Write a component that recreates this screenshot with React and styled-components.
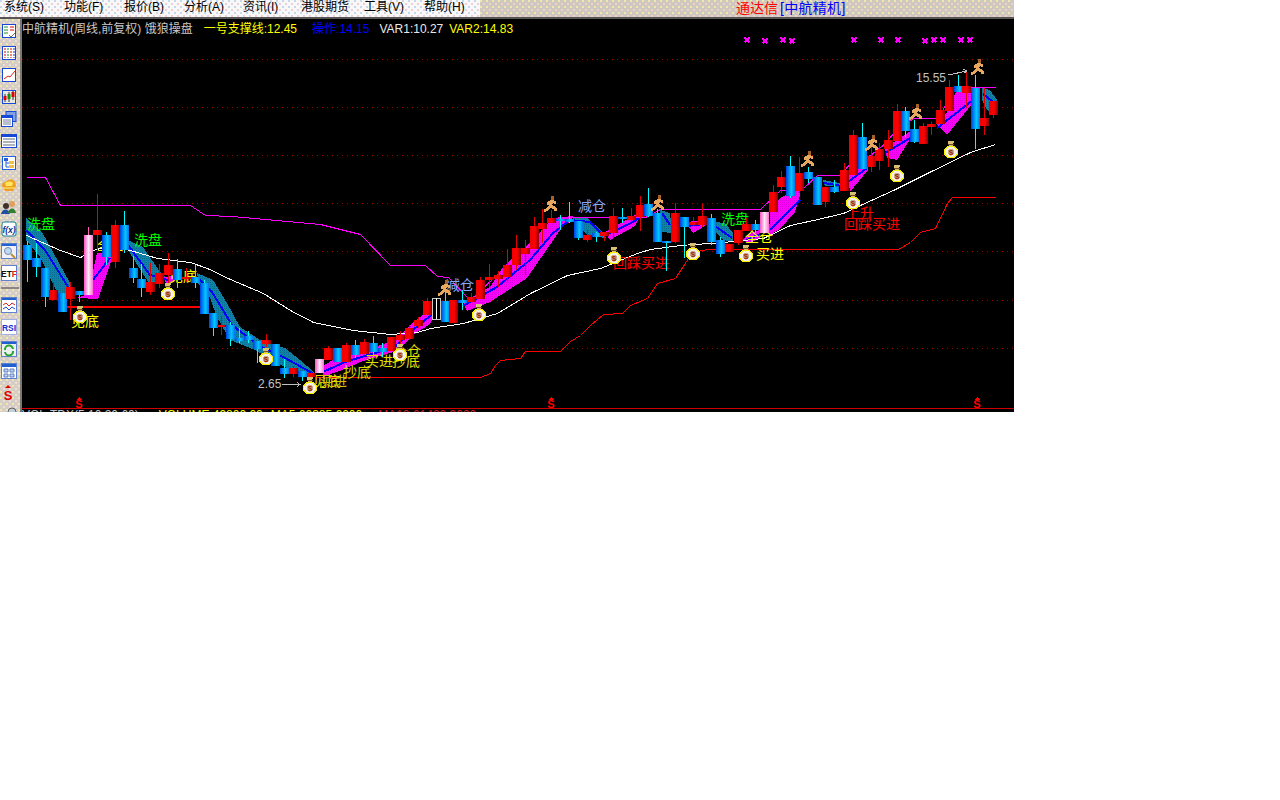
import React from 'react';
import styled, { createGlobalStyle } from 'styled-components';

const FONT = '"Liberation Sans", "Noto Sans CJK SC", sans-serif';

const GlobalStyle = createGlobalStyle`
  html, body { margin: 0; padding: 0; background: #fff; }
  body { font-family: ${FONT}; }
`;

const Window = styled.div`
  width: 1014px;
  height: 412px;
  overflow: hidden;
  display: flex;
  flex-direction: column;
`;

// top menu + title
const TopBar = styled.div`
  display: flex;
  height: 19px;
  box-sizing: border-box;
  flex: none;
  border-bottom: 2px solid #555;
`;

const MenuBar = styled.div`
  width: 480px;
  flex: none;
  display: flex;
  padding-left: 4px;
  box-sizing: border-box;
  background-color: #f8f8f8;
  background-image:
    radial-gradient(circle at 1px 1px, #c8d8e8 1px, transparent 1px),
    radial-gradient(circle at 4px 4px, #f0d0d8 1px, transparent 1px);
  background-size: 6px 6px;
`;

const MenuItem = styled.span`
  width: ${p => p.$w}px;
  font-size: 12px;
  line-height: 14px;
  color: #000;
  white-space: nowrap;
`;

const TitleBar = styled.div`
  flex: 1;
  display: flex;
  padding-left: 256px;
  font-size: 14px;
  line-height: 16px;
  background-color: #cfc8c0;
  background-image:
    radial-gradient(circle at 1px 1px, #f0e8a8 1px, transparent 1px),
    radial-gradient(circle at 4px 4px, #f0d0c8 1px, transparent 1px);
  background-size: 6px 6px;
`;

const TitleText = styled.span`
  color: ${p => p.$color};
  margin-left: ${p => p.$gap || 0}px;
  letter-spacing: ${p => p.$spacing || 0}px;
  white-space: pre;
`;

const Body = styled.div`
  flex: 1;
  display: flex;
  min-height: 0;
`;

const ToolBar = styled.div`
  width: 22px;
  flex: none;
  display: flex;
  flex-direction: column;
  align-items: flex-start;
  gap: 6px;
  padding: 4px 0 0 1px;
  box-sizing: border-box;
  overflow: hidden;
  border-right: 2px solid #777;
  background-color: #d4cec6;
  background-image:
    radial-gradient(circle at 1px 1px, #f0e8b0 1px, transparent 1px),
    radial-gradient(circle at 4px 4px, #f4dcd4 1px, transparent 1px);
  background-size: 6px 6px;
`;

const ToolIcon = styled.svg`
  width: 16px;
  height: 16px;
  flex: none;
  display: block;
`;

const ToolSeparator = styled.div`
  width: 18px;
  height: 2px;
  flex: none;
  margin-bottom: 2px;
  background: #8a8580;
`;

const ChartPane = styled.div`
  position: relative;
  flex: 1;
  display: flex;
  flex-direction: column;
  background: #000;
  min-width: 0;
`;

const Legend = styled.div`
  position: absolute;
  top: 3px;
  left: 0;
  display: flex;
  font-size: 12px;
  line-height: 14px;
  white-space: pre;
`;

const LegendItem = styled.span`
  color: ${p => p.$color};
  margin-left: ${p => p.$gap || 0}px;
`;

const ChartSvg = styled.svg`
  display: block;
  width: 992px;
  height: 390px;
  flex: none;
  shape-rendering: crispEdges;
`;

const IndicatorRow = styled.div`
  height: 3px;
  overflow: hidden;
  display: flex;
  font-size: 12px;
  line-height: 12px;
  white-space: pre;
`;

const ChartLabel = styled.text`
  fill: ${p => p.$color};
  font-family: ${FONT};
  font-size: ${p => p.$size || 14}px;
`;

const FX = [
  [747, 40], [765, 41], [783, 40], [792, 41], [854, 40], [881, 40], [898, 40],
  [925, 41], [934, 40], [943, 40], [961, 40], [970, 40],
];

// x, body top, body bottom, high, low, kind (b blue, r red, p pink, h hollow)
const CANDLES = [
  [27, 245, 260, 241, 282, 'b'], [36, 258, 267, 243, 277, 'b'], [45, 268, 297, 268, 307, 'b'],
  [53, 290, 300, 282, 300, 'r'], [62, 293, 312, 293, 312, 'b'], [70, 287, 299, 282, 320, 'r'],
  [79, 291, 295, 291, 302, 'b'], [88, 235, 295, 227, 295, 'p'], [97, 230, 235, 194, 250, 'r'],
  [106, 235, 257, 232, 265, 'b'], [115, 225, 262, 220, 268, 'r'], [124, 225, 250, 211, 253, 'b'],
  [133, 268, 278, 256, 283, 'b'], [141, 279, 288, 264, 297, 'b'], [150, 282, 292, 263, 295, 'r'],
  [159, 273, 284, 264, 288, 'r'], [168, 265, 275, 253, 284, 'r'], [177, 269, 280, 259, 288, 'b'],
  [186, 277, 279, 268, 282, 'r'], [195, 277, 283, 265, 288, 'b'], [204, 283, 314, 280, 314, 'b'],
  [213, 313, 328, 313, 336, 'b'], [221, 325, 327, 316, 335, 'r'], [230, 325, 339, 322, 346, 'b'],
  [239, 338, 341, 328, 343, 'b'], [248, 336, 340, 331, 343, 'b'], [257, 341, 349, 341, 363, 'b'],
  [266, 340, 344, 334, 347, 'r'], [275, 344, 366, 344, 366, 'b'], [284, 368, 374, 359, 378, 'b'],
  [293, 368, 374, 366, 377, 'r'], [302, 371, 377, 371, 381, 'b'], [311, 373, 377, 372, 380, 'r'],
  [319, 359, 373, 359, 373, 'p'], [328, 348, 360, 346, 360, 'r'], [337, 348, 362, 348, 362, 'b'],
  [346, 345, 362, 343, 362, 'r'], [355, 345, 355, 340, 358, 'b'], [364, 342, 354, 339, 354, 'r'],
  [373, 343, 352, 336, 357, 'b'], [382, 348, 352, 343, 357, 'b'], [391, 337, 351, 337, 351, 'r'],
  [400, 335, 340, 331, 351, 'r'], [409, 328, 339, 325, 339, 'r'], [418, 320, 326, 317, 328, 'r'],
  [427, 301, 315, 298, 315, 'r'], [436, 298, 319, 298, 319, 'h'], [445, 301, 322, 292, 322, 'b'],
  [453, 300, 323, 300, 323, 'r'], [462, 300, 303, 290, 310, 'b'], [471, 297, 302, 293, 302, 'r'],
  [480, 280, 299, 277, 299, 'r'], [489, 277, 280, 264, 287, 'r'], [498, 275, 279, 271, 287, 'r'],
  [507, 265, 277, 249, 282, 'r'], [516, 248, 265, 235, 270, 'r'], [525, 248, 254, 240, 275, 'r'],
  [534, 226, 249, 217, 249, 'r'], [542, 223, 229, 209, 243, 'r'], [551, 218, 223, 210, 223, 'r'],
  [560, 219, 221, 215, 230, 'b'], [569, 219, 222, 202, 223, 'b'], [578, 221, 238, 221, 240, 'b'],
  [587, 235, 240, 230, 242, 'r'], [596, 233, 237, 232, 242, 'b'], [604, 232, 236, 232, 241, 'r'],
  [613, 216, 233, 208, 238, 'r'], [622, 217, 219, 208, 223, 'b'], [631, 216, 220, 208, 222, 'r'],
  [640, 205, 217, 196, 231, 'r'], [648, 204, 216, 188, 217, 'b'], [657, 213, 242, 209, 242, 'b'],
  [666, 241, 243, 241, 271, 'b'], [675, 213, 242, 203, 243, 'r'], [684, 217, 227, 217, 258, 'b'],
  [693, 222, 225, 217, 226, 'r'], [702, 216, 225, 204, 227, 'r'], [711, 218, 242, 214, 245, 'b'],
  [720, 240, 254, 237, 257, 'b'], [729, 244, 252, 244, 252, 'r'], [738, 230, 243, 230, 245, 'r'],
  [746, 224, 231, 218, 231, 'r'], [755, 224, 230, 220, 233, 'b'], [764, 212, 233, 212, 233, 'p'],
  [773, 192, 212, 185, 212, 'r'], [781, 177, 187, 171, 193, 'r'], [790, 166, 196, 156, 198, 'b'],
  [799, 173, 191, 157, 193, 'r'], [808, 172, 179, 167, 183, 'b'], [817, 177, 205, 177, 205, 'b'],
  [825, 187, 202, 187, 207, 'r'], [834, 187, 192, 180, 193, 'b'], [844, 170, 191, 163, 191, 'r'],
  [853, 135, 175, 130, 175, 'r'], [862, 137, 169, 123, 169, 'b'], [871, 156, 167, 143, 172, 'r'],
  [879, 149, 161, 143, 170, 'r'], [888, 140, 149, 130, 167, 'r'], [897, 111, 141, 104, 141, 'r'],
  [905, 111, 131, 107, 137, 'b'], [914, 129, 142, 120, 143, 'b'], [923, 126, 144, 123, 144, 'r'],
  [931, 124, 127, 122, 135, 'r'], [940, 110, 124, 100, 124, 'r'], [949, 87, 111, 80, 111, 'r'],
  [958, 86, 92, 75, 92, 'b'], [966, 86, 93, 72, 108, 'r'], [975, 88, 129, 75, 149, 'b'],
  [984, 118, 126, 88, 135, 'r'], [993, 101, 115, 101, 118, 'r'],
];

const TEAL_BANDS = [
  '26,218 42,232 70,283 72,298 57,292 40,257 26,240',
  '128,240 143,247 160,272 167,278 150,285 128,250',
  '197,273 213,280 227,303 240,327 260,340 285,348 300,360 314,372 314,376 295,372 275,362 255,350 230,340 217,317 207,290 197,283',
  '573,217 587,218 603,232 606,238 590,236 576,226',
  '660,210 670,213 672,233 662,232',
  '715,222 725,223 733,233 733,242 723,240 715,232',
  '823,180 840,183 842,187 825,186',
  '982,88 990,90 997,100 997,115 987,110 982,100',
];

const MAGENTA_BANDS = [
  '77,298 88,294 97,253 111,254 111,262 98,299',
  '163,277 173,276 174,282 166,283',
  '323,366 343,354 363,351 395,340 413,322 430,310 440,298 440,303 430,324 413,335 397,351 363,361 342,370 323,377',
  '463,302 490,287 503,267 530,243 553,218 573,216 570,222 563,226 545,252 527,278 490,302 467,311',
  '605,232 633,216 641,213 635,226 610,240',
  '686,222 695,221 705,222 705,226 693,233',
  '742,240 750,233 760,230 760,238 750,243',
  '770,212 780,198 800,188 800,195 795,212 780,229 769,236',
  '848,175 868,158 868,170 850,192',
  '885,148 912,130 912,136 897,160 887,158',
  '937,125 947,112 957,90 973,90 972,104 947,135',
];

const BLUE_LINES = [
  '26,230 45,250 70,290', '93,280 110,258', '128,245 150,275 168,280',
  '197,277 212,292 232,325 258,345 285,358 314,374',
  '323,372 345,362 395,347 413,330 435,312',
  '463,306 497,287 530,260 553,233 570,220 590,222 604,236',
  '608,234 633,222 642,216', '662,213 670,225', '686,226 705,224', '715,226 732,238',
  '745,241 760,234', '770,230 800,200', '824,183 842,186', '848,182 867,168',
  '885,153 912,137', '937,128 973,100', '983,94 996,104',
];

const RED_SUPPORT = '67,307 200,307';
const RED_STEPS = '316,377 480,377 490,373 495,365 500,360 520,358 525,351 560,351 570,341 580,335 590,325 603,314 622,313 630,305 647,298 657,283 675,278 688,258 700,250 710,249 898,249 910,242 920,232 935,228 947,203 952,197 995,197';
const MAGENTA_LINE = '26,177 45,177 60,205 190,205 205,215 232,216 320,224 360,234 390,265 425,265 437,276 448,277 470,300 553,220 568,217 645,217 660,209 760,209 780,190 803,188 817,175 840,175 850,163 870,155 885,143 893,133 913,118 937,118 947,102 955,87 995,87';
const WHITE_LINE = '26,235 60,250 80,257 93,250 110,245 130,250 157,258 190,262 207,268 230,279 263,293 290,310 313,322 353,330 390,334 417,332 430,328 463,323 497,313 530,293 567,275 600,268 637,253 650,249 680,245 723,242 763,238 790,225 813,220 843,213 860,205 893,190 927,173 970,152 995,144';

const BAGS = [
  [80, 315], [168, 292], [266, 357], [310, 386], [400, 353], [479, 313],
  [614, 256], [693, 252], [746, 254], [853, 201], [897, 174], [951, 150],
];

const RUNNERS = [
  [445, 288], [551, 204], [658, 203], [808, 159], [872, 143], [916, 112], [978, 67],
];

const LABELS = [
  ['洗盘', 27, 229, '#00ff00'],
  ['洗盘', 134, 245, '#00ff00'],
  ['洗盘', 721, 224, '#00ff00'],
  ['见底', 71, 326, '#ffff00'],
  ['全仓', 97, 250, '#ffff00'],
  ['见底', 169, 281, '#ffff00'],
  ['见底', 313, 386, '#e8e800'],
  ['买进', 319, 386, '#d0c000'],
  ['抄底', 343, 377, '#d8d800'],
  ['买进', 365, 366, '#e0e000'],
  ['抄底', 392, 366, '#e0e000'],
  ['全仓', 393, 356, '#e0e000'],
  ['减仓', 446, 290, '#88a8ff'],
  ['减仓', 578, 211, '#88a8ff'],
  ['回踩买进', 613, 268, '#ff0000'],
  ['上升', 846, 218, '#ff0000'],
  ['回踩买进', 844, 229, '#ff0000'],
  ['全仓', 745, 242, '#ffff00'],
  ['买进', 756, 259, '#ffff00'],
];

const MoneyBag = ({ x, y }) => (
  <g transform={`translate(${x},${y})`}>
    <polygon points="-3,-9 3,-9 2,-4 -2,-4" fill="#d8c070" />
    <rect x="-3" y="-6" width="6" height="1" fill="#705020" />
    <ellipse cx="0" cy="2" rx="7.5" ry="6.5" fill="#f8f000" />
    <ellipse cx="0" cy="2" rx="6" ry="5" fill="#f4f0e4" />
    <ellipse cx="0" cy="2" rx="3.5" ry="3" fill="#c8a890" />
    <text x="0" y="5" textAnchor="middle" fontSize="8" fontWeight="bold" fontFamily={FONT} fill="#a02800">$</text>
  </g>
);

const Runner = ({ x, y }) => (
  <g transform={`translate(${x},${y})`} fill="none" stroke="#e8a860" strokeWidth="3">
    <circle cx="1.5" cy="-6" r="1.5" fill="#a86028" strokeWidth="1" stroke="#a86028" />
    <path d="M1 -3 L-1 2 M-4 0 L1 -3 L5 -1 M-1 2 L4 4 L5 7 M-1 2 L-3 5 L-7 7" />
  </g>
);

const Candle = ({ c }) => {
  const [x, top, bottom, high, low, kind] = c;
  const wick = kind === 'b' ? '#00ffff' : kind === 'p' ? '#ff60c0' : kind === 'h' ? '#c0c0c0' : '#e00000';
  const h = Math.max(bottom - top, 2);
  return (
    <g>
      <line x1={x + 0.5} x2={x + 0.5} y1={high} y2={low} stroke={wick} />
      {kind === 'h' ? (
        <>
          <rect x={x - 3.5} y={top + 0.5} width={8} height={h} fill="#000" stroke="#c8c8c8" />
          <line x1={x + 0.5} x2={x + 0.5} y1={top} y2={top + h} stroke="#ffffff" />
        </>
      ) : (
        <rect x={x - 4} y={top} width={9} height={h} fill={`url(#grad-${kind})`} />
      )}
    </g>
  );
};

const StartMark = ({ x }) => (
  <g>
    <polygon points={`${x},397 ${x - 3},400 ${x + 3},400`} fill="#ff0000" />
    <text x={x} y={408} textAnchor="middle" fontSize="11" fontWeight="bold" fontFamily={FONT} fill="#ff0000">S</text>
  </g>
);

const Frame = ({ fill = '#fff', color = '#1848d8' }) => (
  <rect x="1.5" y="1.5" width="13" height="13" fill={fill} stroke={color} />
);

const TOOL_ICONS = [
  <><Frame /><path d="M3 4h4M3 7h4M3 10h4" stroke="#209020" /><path d="M9 4h4M9 7h4" stroke="#e00000" /><path d="M8 12l2 2 4-4" stroke="#707070" fill="none" /></>,
  <><Frame /><path d="M4 3v10M4 3" stroke="#e00000" strokeDasharray="2 1" /><path d="M7 3v10" stroke="#109010" strokeDasharray="2 1" /><path d="M10 3v10" stroke="#e00000" strokeDasharray="2 1" /><path d="M13 3v10" stroke="#1030d0" strokeDasharray="2 1" /></>,
  <><Frame /><path d="M3 12l4-3 2 1 5-6" stroke="#e02020" fill="none" /></>,
  <><Frame fill="#e8e8e0" /><path d="M4 5v8M8 3v10M12 2v9" stroke="#303030" /><rect x="2.5" y="7" width="3" height="4" fill="#e00000" /><rect x="6.5" y="5" width="3" height="5" fill="#109010" /><rect x="10.5" y="3" width="3" height="5" fill="#e00000" /></>,
  <><rect x="5" y="0.5" width="10" height="10" fill="#80a0e0" stroke="#1848d8" /><rect x="0.5" y="4.5" width="11" height="11" fill="#fff" stroke="#1848d8" /><rect x="1" y="5" width="10" height="2" fill="#1848d8" /><path d="M2 9h8M2 11h8M2 13h8" stroke="#7080a0" /></>,
  <><rect x="0.5" y="1.5" width="15" height="13" fill="#fff" stroke="#1848d8" /><rect x="1" y="2" width="14" height="2" fill="#1848d8" /><path d="M2 6h12M2 9h12M2 12h12" stroke="#606880" /></>,
  <><Frame color="#2060e0" /><rect x="3" y="3" width="4" height="3" fill="#2060e0" /><rect x="8" y="6" width="5" height="3" fill="#f0c040" /><rect x="8" y="10" width="5" height="3" fill="#f0c040" /><path d="M5 6v6h3M5 8h3" stroke="#2060e0" fill="none" /></>,
  <><path d="M1 9 C1 4 4 6 7 3 C11 1 15 4 15 9 L12 14 L4 14Z" fill="#f0a020" /><path d="M4 6 C7 4 10 4 12 6 L11 9 L5 9Z" fill="#ffe860" /><path d="M2 11h12" stroke="#fff080" /></>,
  <><circle cx="5" cy="7" r="3" fill="#403028" /><path d="M0 15 C1 9 8 9 9 15Z" fill="#2050a0" /><circle cx="11" cy="5" r="3" fill="#e0a060" /><path d="M7 14 C8 8 14 8 15 14Z" fill="#308030" /></>,
  <><rect x="1" y="1" width="14" height="14" rx="2" fill="#fff" stroke="#108090" /><text x="8" y="11.5" textAnchor="middle" fontSize="8.5" fontStyle="italic" fontWeight="bold" fontFamily={FONT} fill="#103090">f(x)</text></>,
  <><rect x="0.5" y="0.5" width="15" height="15" fill="#f0f0f8" stroke="#6080d0" /><rect x="1" y="1" width="14" height="2" fill="#2060d0" /><circle cx="7" cy="8" r="3.5" fill="#c0d8f0" stroke="#7090b0" /><path d="M10 11l4 4" stroke="#c09030" strokeWidth="2" /></>,
  <><rect x="0.5" y="0.5" width="15" height="15" fill="#fff" stroke="#6080d0" /><text x="8" y="11.5" textAnchor="middle" fontSize="8.5" fontWeight="bold" fontFamily={FONT} fill="#101010">ET<tspan fill="#e02020">F</tspan></text></>,
  <><rect x="0.5" y="0.5" width="15" height="15" fill="#fff" stroke="#6080d0" /><rect x="1" y="1" width="14" height="2" fill="#2060d0" /><path d="M2 8l3-2 3 3 3-3 3 2" stroke="#e02020" fill="none" /><path d="M2 12l3-2 3 3 3-3 3 2" stroke="#2040d0" fill="none" /></>,
  <><rect x="0.5" y="0.5" width="15" height="15" fill="#fff" stroke="#a0b0e0" /><text x="8" y="11.5" textAnchor="middle" fontSize="8.5" fontWeight="bold" fontFamily={FONT} fill="#1030d0">RSI</text></>,
  <><rect x="0.5" y="0.5" width="15" height="15" fill="#e8f0f0" stroke="#6080d0" /><rect x="1" y="1" width="14" height="2" fill="#2060d0" /><path d="M4 9a4 4 0 0 1 8 -1M12 10a4 4 0 0 1 -8 1" stroke="#30a030" strokeWidth="2" fill="none" /></>,
  <><rect x="0.5" y="0.5" width="15" height="15" fill="#fff" stroke="#6080d0" /><rect x="1" y="1" width="14" height="3" fill="#2060d0" /><path d="M3 6h4v3h-4zM9 6h4v3h-4zM3 11h4v3h-4zM9 11h4v3h-4z" fill="#c0d0f0" stroke="#6080c0" /></>,
  <><polygon points="7,0 4,3 10,3" fill="#e00000" /><text x="7" y="15" textAnchor="middle" fontSize="13" fontWeight="bold" fontFamily={FONT} fill="#e00000">S</text></>,
  <><path d="M1 8 L6 6 L6 8Z" fill="#e09040" /><circle cx="11" cy="5" r="4" fill="#c0d0d8" stroke="#606060" /></>,
];

const MENU = [
  ['系统(S)', 60], ['功能(F)', 60], ['报价(B)', 60], ['分析(A)', 59], ['资讯(I)', 58],
  ['港股期货', 63], ['工具(V)', 60], ['帮助(H)', 50],
];

export default function App() {
  return (
    <>
      <GlobalStyle />
      <Window>
        <TopBar>
          <MenuBar>
            {MENU.map(([label, w]) => <MenuItem key={label} $w={w}>{label}</MenuItem>)}
          </MenuBar>
          <TitleBar>
            <TitleText $color="#ff0000">通达信</TitleText>
            <TitleText $color="#0000ff" $gap={2} $spacing={0.3}>[中航精机]</TitleText>
          </TitleBar>
        </TopBar>
        <Body>
          <ToolBar>
            {TOOL_ICONS.map((icon, i) => (
              <React.Fragment key={i}>
                <ToolIcon viewBox="0 0 16 16">{icon}</ToolIcon>
                {i === 11 && <ToolSeparator />}
              </React.Fragment>
            ))}
          </ToolBar>
          <ChartPane>
            <ChartSvg viewBox="22 19 992 390">
              <defs>
                <linearGradient id="grad-b">
                  <stop offset="0" stopColor="#0040e0" />
                  <stop offset="0.6" stopColor="#00c8ff" />
                  <stop offset="1" stopColor="#0070e8" />
                </linearGradient>
                <linearGradient id="grad-r">
                  <stop offset="0" stopColor="#f00000" />
                  <stop offset="0.55" stopColor="#ff0000" />
                  <stop offset="1" stopColor="#900000" />
                </linearGradient>
                <linearGradient id="grad-p">
                  <stop offset="0" stopColor="#ff50c0" />
                  <stop offset="0.5" stopColor="#ffe8f8" />
                  <stop offset="1" stopColor="#ff70d0" />
                </linearGradient>
                <pattern id="teal" width="2" height="2" patternUnits="userSpaceOnUse">
                  <rect width="2" height="2" fill="#0c84a8" />
                  <rect width="1" height="1" fill="#0a6c90" />
                </pattern>
                <pattern id="magenta" width="2" height="2" patternUnits="userSpaceOnUse">
                  <rect width="2" height="2" fill="#ff00ff" />
                  <rect width="1" height="1" fill="#e000e0" />
                </pattern>
              </defs>

              {[59, 107, 155, 203, 251, 300, 348].map(y => (
                <line key={y} x1="22" x2="1014" y1={y + 0.5} y2={y + 0.5} stroke="#a00000" strokeDasharray="1 4" />
              ))}

              {FX.map(([x, y]) => (
                <path key={x} d={`M${x - 2.5} ${y - 2.5}L${x + 2.5} ${y + 2.5}M${x + 2.5} ${y - 2.5}L${x - 2.5} ${y + 2.5}`} stroke="#ff00ff" strokeWidth="1.6" />
              ))}

              {TEAL_BANDS.map((p, i) => <polygon key={i} points={p} fill="url(#teal)" />)}
              {MAGENTA_BANDS.map((p, i) => <polygon key={i} points={p} fill="url(#magenta)" />)}
              {BLUE_LINES.map((p, i) => <polyline key={i} points={p} fill="none" stroke="#0000ff" strokeWidth="2" />)}

              <g transform="translate(0.5,0.5)" fill="none">
                <polyline points={MAGENTA_LINE} stroke="#ff00ff" />
                <polyline points={WHITE_LINE} stroke="#ffffff" />
                <polyline points={RED_STEPS} stroke="#ff0000" />
              </g>
              <polyline points={RED_SUPPORT} fill="none" stroke="#ff0000" strokeWidth="2" />

              {LABELS.map(([text, x, y, color], i) => (
                <ChartLabel key={i} x={x} y={y} $color={color}>{text}</ChartLabel>
              ))}

              {CANDLES.map(c => <Candle key={c[0]} c={c} />)}

              {BAGS.map(([x, y]) => <MoneyBag key={x} x={x} y={y} />)}
              {RUNNERS.map(([x, y]) => <Runner key={x} x={x} y={y} />)}

              <ChartLabel x="258" y="388" $color="#c0c0c0" $size={12}>2.65</ChartLabel>
              <path d="M282 384.5H300M297 382.5L300 384.5L297 386.5" fill="none" stroke="#c0c0c0" />
              <ChartLabel x="916" y="82" $color="#c0c0c0" $size={12}>15.55</ChartLabel>
              <path d="M948 75L967 71M963 69L967 71L964 73" fill="none" stroke="#c0c0c0" />

              {[79, 551, 977].map(x => <StartMark key={x} x={x} />)}
              <line x1="22" x2="1014" y1="408.5" y2="408.5" stroke="#d00000" />
            </ChartSvg>
            <Legend>
              <LegendItem $color="#c8c8c8">中航精机(周线,前复权) 饿狼操盘</LegendItem>
              <LegendItem $color="#ffff00" $gap={11}>一号支撑线:12.45</LegendItem>
              <LegendItem $color="#0000ff" $gap={15}>操作:14.15</LegendItem>
              <LegendItem $color="#e8e8e8" $gap={10}>VAR1:10.27</LegendItem>
              <LegendItem $color="#ffff00" $gap={6}>VAR2:14.83</LegendItem>
            </Legend>
            <IndicatorRow>
              <LegendItem $color="#c8c8c8">VOL-TDX(5,10,20,60)</LegendItem>
              <LegendItem $color="#ffff00" $gap={20}>VOLUME:49800.00</LegendItem>
              <LegendItem $color="#ffff00" $gap={8}>MA5:60385.6000</LegendItem>
              <LegendItem $color="#d02020" $gap={16}>MA10:61420.9000</LegendItem>
            </IndicatorRow>
          </ChartPane>
        </Body>
      </Window>
    </>
  );
}
